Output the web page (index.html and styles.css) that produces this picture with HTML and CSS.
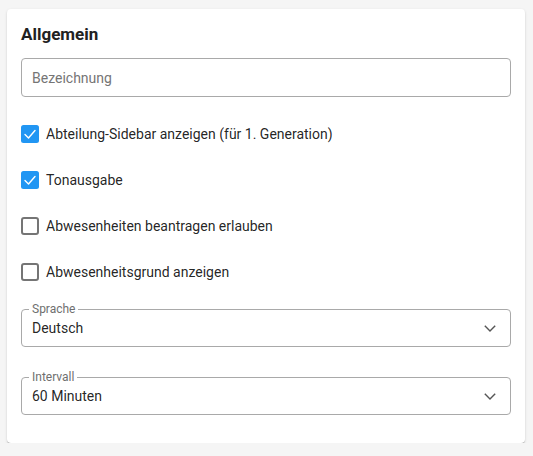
FILE: index.html
```html
<!DOCTYPE html>
<html lang="de">
<head>
<meta charset="utf-8">
<title>Allgemein</title>
<link rel="stylesheet" href="styles.css">
</head>
<body>
<div class="page">
  <section class="card">
    <h2 class="title">Allgemein</h2>
    <input class="field" type="text" placeholder="Bezeichnung">
    <div class="checks">
      <label class="check">
        <svg class="box" viewBox="0 0 18 18" width="18" height="18"><rect x="0" y="0" width="18" height="18" rx="2.5" fill="#2196f3"/><polyline points="4,9.5 7.5,13 14,5.5" fill="none" stroke="#fff" stroke-width="1.4" stroke-linecap="round" stroke-linejoin="round"/></svg>
        <span>Abteilung-Sidebar anzeigen (für 1. Generation)</span>
      </label>
      <label class="check">
        <svg class="box" viewBox="0 0 18 18" width="18" height="18"><rect x="0" y="0" width="18" height="18" rx="2.5" fill="#2196f3"/><polyline points="4,9.5 7.5,13 14,5.5" fill="none" stroke="#fff" stroke-width="1.4" stroke-linecap="round" stroke-linejoin="round"/></svg>
        <span>Tonausgabe</span>
      </label>
      <label class="check">
        <svg class="box" viewBox="0 0 18 18" width="18" height="18"><rect x="1" y="1" width="16" height="16" rx="2" fill="#fff" stroke="#757575" stroke-width="2"/></svg>
        <span>Abwesenheiten beantragen erlauben</span>
      </label>
      <label class="check">
        <svg class="box" viewBox="0 0 18 18" width="18" height="18"><rect x="1" y="1" width="16" height="16" rx="2" fill="#fff" stroke="#757575" stroke-width="2"/></svg>
        <span>Abwesenheitsgrund anzeigen</span>
      </label>
    </div>
    <fieldset class="select first">
      <legend>Sprache</legend>
      <div class="select-row">
        <span class="value">Deutsch</span>
        <svg class="chev" viewBox="0 0 12 7" width="12" height="7"><polyline points="0.8,0.8 6,6 11.2,0.8" fill="none" stroke="#555" stroke-width="1.4"/></svg>
      </div>
    </fieldset>
    <fieldset class="select second">
      <legend>Intervall</legend>
      <div class="select-row">
        <span class="value">60 Minuten</span>
        <svg class="chev" viewBox="0 0 12 7" width="12" height="7"><polyline points="0.8,0.8 6,6 11.2,0.8" fill="none" stroke="#555" stroke-width="1.4"/></svg>
      </div>
    </fieldset>
  </section>
</div>
</body>
</html>
```
FILE: styles.css
```css
html, body {
  margin: 0;
  padding: 0;
  background: #f5f5f5;
  font-family: Roboto, "Liberation Sans", sans-serif;
  color: rgba(0, 0, 0, 0.87);
}
.page {
  padding: 9px 8px 0 7px;
}
.card {
  background: #fff;
  border-radius: 4px;
  box-shadow: 0 2px 1px -1px rgba(0,0,0,.2), 0 1px 1px 0 rgba(0,0,0,.14), 0 1px 3px 0 rgba(0,0,0,.12);
  padding: 14px 14px 28px;
  display: flex;
  flex-direction: column;
}
.title {
  margin: 0;
  padding-top: 1px;
  font-size: 17px;
  line-height: 20px;
  font-weight: 700;
  color: #212121;
}
.field {
  margin-top: 14px;
  height: 39px;
  box-sizing: border-box;
  border: 1px solid #a9a9a9;
  border-radius: 4px;
  padding: 0 10px;
  font-family: inherit;
  font-size: 14px;
  color: rgba(0,0,0,0.87);
  outline: none;
  background: #fff;
}
.field::placeholder {
  color: #757575;
  opacity: 1;
}
.checks {
  margin-top: 14px;
  display: flex;
  flex-direction: column;
}
.check {
  height: 46px;
  display: flex;
  align-items: center;
  gap: 7px;
  font-size: 14px;
  line-height: 20px;
}
.box {
  flex: none;
  display: block;
}
.select {
  margin: 0;
  padding: 0 14px 5px 7px;
  border: 1px solid #a9a9a9;
  border-radius: 4px;
  min-inline-size: 0;
}
.select.first { margin-top: 8px; }
.select.second { margin-top: 24px; }
.select legend {
  padding: 0 3px;
  font-size: 12px;
  line-height: 12px;
  color: #6f6f6f;
}
.select-row {
  height: 26px;
  display: flex;
  align-items: center;
  justify-content: space-between;
  padding-left: 3px;
  font-size: 14px;
}
.chev { display: block; }
```
